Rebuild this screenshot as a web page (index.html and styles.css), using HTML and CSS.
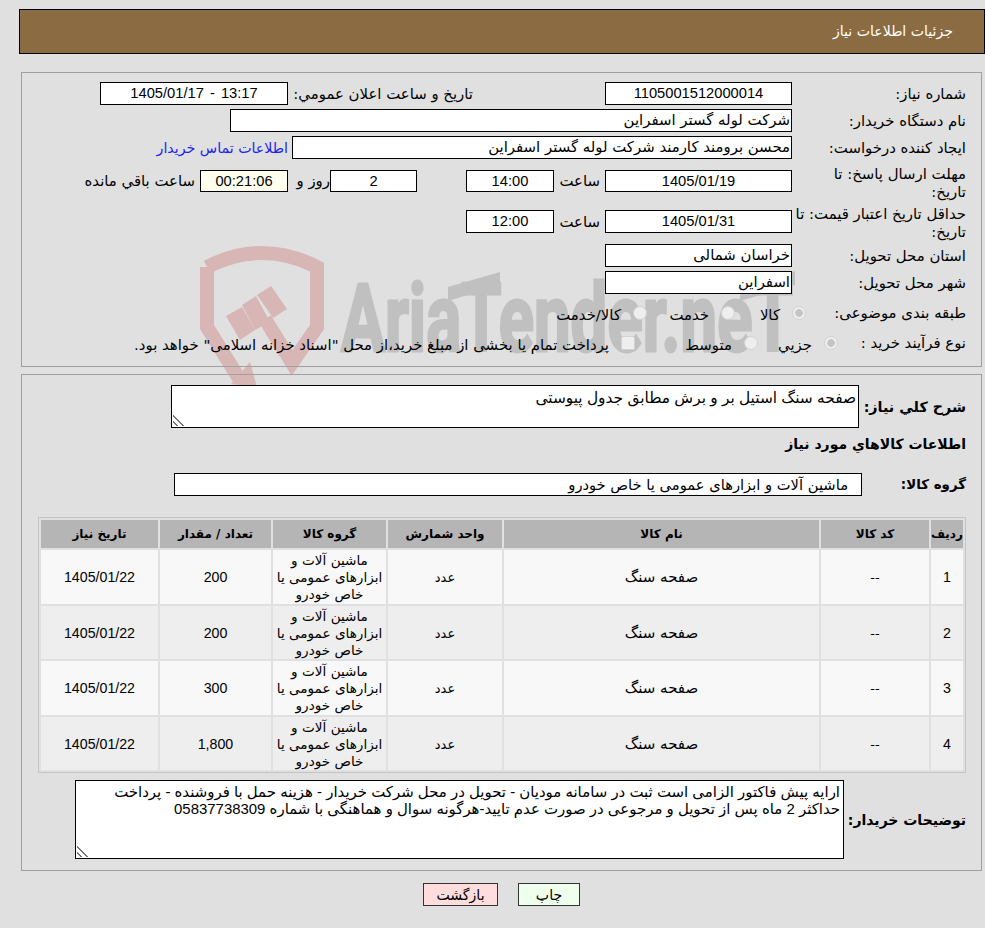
FILE: index.html
```html
<!DOCTYPE html>
<html lang="fa" dir="rtl">
<head>
<meta charset="utf-8">
<title>جزئیات اطلاعات نیاز</title>
<link rel="stylesheet" href="styles.css">
</head>
<body>
<svg class="watermark" viewBox="0 0 640 160" width="640" height="160" aria-hidden="true">
  <path class="wm-shield" d="M27 32 Q82 4 137 32 L137 92 L112 128 L85 84" />
  <path class="wm-shield" d="M27 32 L27 92 L60 145" />
  <g class="wm-gavel">
    <polygon points="46,81 62,72 75,95 60,105" />
    <polygon points="62,70 76,61 90,87 75,95" />
    <polygon points="77,60 91,51 107,74 93,83" />
    <polygon points="70,127 77,152 51,149" />
  </g>
  <text class="wm-text" x="161" y="116" textLength="452" lengthAdjust="spacingAndGlyphs">AriaTender.neT</text>
  <polygon class="wm-bar" points="268,52 320,37 320,50 268,66" />
  <polygon class="wm-bar" points="560,52 615,36 615,50 560,66" />
</svg>

<div class="page">
  <header class="title-bar">جزئیات اطلاعات نیاز</header>

  <section class="panel panel-info">
    <div class="row">
      <div class="label">شماره نياز:</div>
      <div class="field num w-187">1105001512000014</div>
      <div class="pub-label">تاريخ و ساعت اعلان عمومي:</div>
      <div class="field num w-188">1405/01/17 - 13:17</div>
    </div>
    <div class="row">
      <div class="label">نام دستگاه خريدار:</div>
      <div class="field start w-562">شرکت لوله گستر اسفراين</div>
    </div>
    <div class="row">
      <div class="label">ايجاد کننده درخواست:</div>
      <div class="field start w-500">محسن برومند کارمند شرکت لوله گستر اسفراين</div>
      <a class="contact" href="#">اطلاعات تماس خريدار</a>
    </div>
    <div class="row row-two">
      <div class="label">مهلت ارسال پاسخ: تا<br>تاريخ:</div>
      <div class="field num w-187">1405/01/19</div>
      <div class="unit">ساعت</div>
      <div class="field num w-88">14:00</div>
      <div class="field num w-87 after-time">2</div>
      <div class="unit-day">روز و</div>
      <div class="field num w-88 remain">00:21:06</div>
      <div class="unit-rest">ساعت باقي مانده</div>
    </div>
    <div class="row row-two row-tall">
      <div class="label">حداقل تاريخ اعتبار قيمت: تا<br>تاريخ:</div>
      <div class="field num w-187">1405/01/31</div>
      <div class="unit">ساعت</div>
      <div class="field num w-88">12:00</div>
    </div>
    <div class="row">
      <div class="label">استان محل تحويل:</div>
      <div class="field start w-187">خراسان شمالی</div>
    </div>
    <div class="row">
      <div class="label">شهر محل تحويل:</div>
      <div class="field start w-187">اسفراين</div>
    </div>
    <div class="row row-radio">
      <div class="label label-cat">طبقه بندی موضوعی:</div>
      <label class="opt w-71"><input type="radio" name="cat" checked disabled><span>کالا</span></label>
      <label class="opt w-88"><input type="radio" name="cat" disabled><span>خدمت</span></label>
      <label class="opt"><input type="radio" name="cat" disabled><span>کالا/خدمت</span></label>
    </div>
    <div class="row row-buy">
      <div class="label label-buy">نوع فرآيند خريد :</div>
      <label class="opt w-80"><input type="radio" name="buy" checked disabled><span>جزيي</span></label>
      <label class="opt w-123"><input type="radio" name="buy" disabled><span>متوسط</span></label>
      <label class="opt"><input class="check" type="checkbox" disabled><span>پرداخت تمام يا بخشی از مبلغ خريد،از محل "اسناد خزانه اسلامی" خواهد بود.</span></label>
    </div>
  </section>

  <section class="panel panel-items">
    <div class="desc-row">
      <div class="strong-label desc-label">شرح كلي نياز:</div>
      <textarea class="area area-desc" readonly>صفحه سنگ استيل بر و برش مطابق جدول پيوستی</textarea>
    </div>
    <h2 class="items-title">اطلاعات كالاهاي مورد نياز</h2>
    <div class="group-row">
      <div class="strong-label group-label">گروه كالا:</div>
      <div class="field group-value">ماشين آلات و ابزارهای عمومی يا خاص خودرو</div>
    </div>
    <div class="table-wrap">
      <table class="items">
        <colgroup>
          <col class="c-row"><col class="c-code"><col class="c-name"><col class="c-unit"><col class="c-group"><col class="c-qty"><col class="c-date">
        </colgroup>
        <thead>
          <tr><th>رديف</th><th>کد کالا</th><th>نام کالا</th><th>واحد شمارش</th><th>گروه کالا</th><th>تعداد / مقدار</th><th>تاريخ نياز</th></tr>
        </thead>
        <tbody>
          <tr><td class="n">1</td><td>--</td><td class="name">صفحه سنگ</td><td>عدد</td><td class="grp">ماشين آلات و ابزارهای عمومی يا خاص خودرو</td><td class="n">200</td><td class="n">1405/01/22</td></tr>
          <tr><td class="n">2</td><td>--</td><td class="name">صفحه سنگ</td><td>عدد</td><td class="grp">ماشين آلات و ابزارهای عمومی يا خاص خودرو</td><td class="n">200</td><td class="n">1405/01/22</td></tr>
          <tr><td class="n">3</td><td>--</td><td class="name">صفحه سنگ</td><td>عدد</td><td class="grp">ماشين آلات و ابزارهای عمومی يا خاص خودرو</td><td class="n">300</td><td class="n">1405/01/22</td></tr>
          <tr><td class="n">4</td><td>--</td><td class="name">صفحه سنگ</td><td>عدد</td><td class="grp">ماشين آلات و ابزارهای عمومی يا خاص خودرو</td><td class="n">1,800</td><td class="n">1405/01/22</td></tr>
        </tbody>
      </table>
    </div>
    <div class="notes-row">
      <div class="strong-label notes-label">توضیحات خریدار:</div>
      <textarea class="area area-notes" readonly>ارایه پیش فاکتور الزامی است ثبت در سامانه مودیان - تحویل در محل شرکت خریدار - هزینه حمل با فروشنده - پرداخت حداکثر 2 ماه پس از تحویل و مرجوعی در صورت عدم تایید-هرگونه سوال و هماهنگی با شماره 05837738309</textarea>
    </div>
  </section>

  <div class="actions">
    <button class="btn btn-print" type="button">چاپ</button>
    <button class="btn btn-back" type="button">بازگشت</button>
  </div>
</div>
</body>
</html>
```
FILE: styles.css
```css
* { box-sizing: border-box; }
html, body { margin: 0; padding: 0; }
body {
  position: relative;
  width: 985px;
  height: 928px;
  overflow: hidden;
  background: #e0e0e0;
  color: #000;
  font-family: "DejaVu Sans", sans-serif;
  font-size: 14.9px;
  line-height: 18px;
}
.watermark { position: absolute; left: 180px; top: 235px; z-index: 0; direction: ltr; overflow: hidden; }
.wm-shield { fill: none; stroke: #d8b6b6; stroke-width: 14; stroke-linejoin: miter; }
.wm-gavel polygon { fill: #d8b6b6; }
.wm-text { font-family: "Roboto", sans-serif; font-weight: 700; font-size: 95px; fill: #c0c0c0; stroke: #c0c0c0; stroke-width: 3px; direction: ltr; }
.wm-bar { fill: #c0c0c0; }
.page { position: relative; z-index: 1; padding-top: 9px; }

.title-bar {
  width: 966px;
  height: 45px;
  margin-left: 19px;
  padding: 0 31px;
  background: #8b6c42;
  border: 1px solid #000;
  color: #fff;
  font-size: 14.1px;
  line-height: 43px;
}
.panel {
  width: 961px;
  margin-right: 3px;
  border: 1px solid #a0a0a0;
}
.panel-info {
  height: 295px;
  margin-top: 18px;
  padding: 9px 15px 0 0;
  display: flex;
  flex-direction: column;
  gap: 4px;
}
.panel-items { height: 497px; margin-top: 7px; padding: 10px 15px 0 0; }

.row { display: flex; align-items: center; height: 23px; flex: none; }
.row-two { height: 36px; }
.row-two .label { padding-top: 3px; }
.row-tall { height: 37px; }
.row-radio { height: 30px; }
.row-buy { height: 22px; }
.label { width: 174px; flex: none; }
.label-cat { width: 160px; white-space: nowrap; }
.label-buy { width: 128px; white-space: nowrap; }
.field {
  height: 23px;
  flex: none;
  background: #fff;
  border: 1px solid #000;
  line-height: 21px;
  white-space: nowrap;
  overflow: hidden;
}
.row-two .field { height: 22px; line-height: 20px; }
.row-tall .field { height: 23px; line-height: 21px; }
.num {
  font-family: "Liberation Sans", "DejaVu Sans", sans-serif;
  font-size: 14.7px;
  word-spacing: 2px;
  text-align: center;
  direction: ltr;
}
.start { padding: 0 1px; }
.w-187 { width: 187px; }
.w-188 { width: 188px; }
.w-562 { width: 562px; }
.w-500 { width: 500px; }
.w-88 { width: 88px; }
.w-87 { width: 87px; }
.pub-label { width: 317px; flex: none; padding-right: 132px; white-space: nowrap; }
.contact { margin-right: 4px; font-size: 14.2px; color: #2222ee; text-decoration: none; white-space: nowrap; }
.unit { width: 51px; padding-right: 5px; flex: none; }
.after-time { margin-right: 49px; }
.unit-day { width: 42px; flex: none; white-space: nowrap; }
.remain { background: #ffffee; }
.unit-rest { padding-right: 5px; white-space: nowrap; }

.opt { display: flex; align-items: center; flex: none; white-space: nowrap; }
.w-71 { width: 71px; }
.w-80 { width: 80px; }
.w-123 { width: 123px; }
.opt span { margin-right: 12px; position: relative; top: 2px; }
.opt input {
  appearance: none;
  width: 14px;
  height: 14px;
  margin: 0;
  flex: none;
  border: 1px solid #d2d2d2;
  border-radius: 50%;
  background: #eeeeee;
}
.opt input:checked { background: radial-gradient(circle, #c4c4c4 0 3.5px, #eeeeee 4px); }
.opt input.check { border-radius: 2px; }

.desc-row { display: flex; height: 43px; }
.strong-label { font-weight: 700; font-size: 14.3px; white-space: nowrap; flex: none; }
.desc-label { width: 107px; line-height: 45px; }
.area {
  display: block;
  flex: none;
  margin: 0;
  padding: 1px 2px;
  background: #fff;
  border: 1px solid #000;
  border-radius: 0;
  outline: none;
  font-family: "Liberation Sans", "DejaVu Sans", sans-serif;
  font-size: 14.95px;
  line-height: 17px;
  color: #000;
  overflow: hidden;
}
.area::-webkit-resizer {
  background: linear-gradient(45deg, transparent 0 18%, #777 18% 27%, transparent 27% 42%, #777 42% 51%, transparent 51%) left 1px bottom 1px / 11px 11px no-repeat;
}
.area-desc { width: 688px; height: 43px; padding-top: 3px; font-size: 15.4px; }
.items-title { margin: 7px 0 0; font-size: 14px; font-weight: 700; line-height: 18px; height: 18px; }
.group-row { display: flex; align-items: center; height: 23px; margin-top: 20px; }
.group-label { width: 104px; font-size: 13.4px; }
.group-value { width: 688px; height: 23px; padding-right: 13px; line-height: 22px; font-size: 14.7px; }

.table-wrap {
  width: 928px;
  height: 256px;
  margin: 21px 0 0;
  border: 1px solid #c4c4c4;
}
.items { width: 926px; table-layout: fixed; border-collapse: separate; border-spacing: 2px; margin: 0; }
.c-row { width: 32px; }
.c-code { width: 108px; }
.c-name { width: 315px; }
.c-unit { width: 114px; }
.c-group { width: 113px; }
.c-qty { width: 111px; }
.c-date { width: 117px; }
.items th {
  height: 28px;
  padding: 0;
  background: #b5b5b5;
  font-size: 12px;
  font-weight: 700;
  text-align: center;
  white-space: nowrap;
}
.items td {
  height: 53.5px;
  padding: 2px 3px 0;
  background: #f8f8f8;
  font-size: 13px;
  line-height: 17px;
  text-align: center;
  vertical-align: middle;
}
.items tbody tr:nth-child(even) td { background: #eeeeee; }
.items td.n { font-family: "Liberation Sans", "DejaVu Sans", sans-serif; font-size: 14.2px; }
.items td.name { font-size: 15px; }
.items td.grp { font-size: 13.6px; padding: 2px 1px 0; }

.notes-row { display: flex; align-items: center; height: 79px; margin-top: 7px; }
.notes-label { width: 122px; font-size: 14px; }
.area-notes { width: 769px; height: 79px; padding: 2px 3px; }

.actions { display: flex; justify-content: center; gap: 20px; margin-top: 12px; padding-left: 18px; }
.btn {
  height: 23px;
  padding: 0;
  border: 1px solid #333;
  border-radius: 0;
  font-family: "DejaVu Sans", sans-serif;
  font-size: 14.1px;
  color: #000;
}
.btn-print { width: 62px; background: #eeffee; }
.btn-back { width: 75px; background: #ffdddd; }
```
